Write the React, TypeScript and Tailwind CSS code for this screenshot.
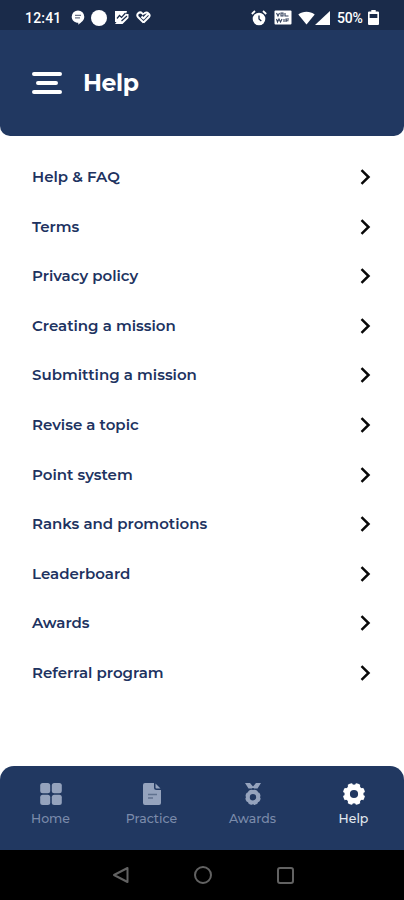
import type { ReactNode } from "react";

const menuItems = [
  "Help & FAQ",
  "Terms",
  "Privacy policy",
  "Creating a mission",
  "Submitting a mission",
  "Revise a topic",
  "Point system",
  "Ranks and promotions",
  "Leaderboard",
  "Awards",
  "Referral program",
];

const notchAngles = [0, 45, 90, 135, 180, 225, 270, 315];

function StatusBar() {
  return (
    <div className="flex h-[30px] items-center bg-[#1a2b4a] pt-[5px] pl-[25px] pr-[25px] font-[Roboto,sans-serif] text-[14px] font-medium leading-none text-white">
      <span className="w-[46px] tracking-[0.2px]">12:41</span>
      {/* chat bubble */}
      <svg className="h-[15px] w-[14px]" viewBox="0 0 14 15">
        <path d="M7 .5A6.300 6.300 0 0 1 13.300 6.800c0 3.500-3 5.500-6 8v-2C3.500 12.800.7 10.200.7 6.800A6.300 6.300 0 0 1 7 .5Z" fill="#fff" />
        <path d="M4 5.300h6M4 7.800h5" stroke="#6b7487" strokeWidth="1.200" />
      </svg>
      <span className="ml-[6px] h-[16px] w-[16px] rounded-full bg-white" />
      {/* activity note */}
      <svg className="ml-[7px] h-[15px] w-[15px]" viewBox="0 0 15 15" fill="none">
        <path d="M1 1h12l-1 3h2.500v4L8.500 14H1l1.500-2H1Z" fill="#fff" />
        <path d="m3 8.500 2.500-3 2 2L11.500 3M7.500 11l5.500-5" stroke="#1a2b4a" strokeWidth="1.200" />
      </svg>
      {/* heart */}
      <svg className="ml-[7px] h-[13px] w-[15px]" viewBox="0 0 15 13" fill="none" stroke="#fff" strokeWidth="2" strokeLinejoin="round">
        <path d="M7.500 11.500 2.200 6.300C-.3 3.500 3.500-.2 6.200 2.400l1.300 1.300M5.500 5.500l2 2 4.700-5C14 3 14 5 12.800 6.300L7.500 11.500M8 2.800c1.300-1.700 3.200-1.700 4.400-.4" />
      </svg>

      {/* alarm */}
      <svg className="ml-auto h-[16px] w-[16px]" viewBox="0 0 16 16" fill="none">
        <circle cx="8" cy="9" r="6.300" fill="#fff" />
        <path d="m.8 4 3.200-3M15.200 4 12 1" stroke="#fff" strokeWidth="1.800" />
        <path d="M8 5.500V9l2.300 2" stroke="#1a2b4a" strokeWidth="1.300" />
      </svg>
      {/* voice over wifi */}
      <svg className="ml-[7px] h-[15px] w-[18px]" viewBox="0 0 18 15" fill="none">
        <rect x=".5" y=".5" width="17" height="14" rx="1" fill="#fff" />
        <path d="m2.500 3 1.500 3 1.500-3M7 3h2v3H7ZM11 3v3h3.500M2.500 9l1 3L5 9l1.500 3L8 9M10 9v3M12 12V9h3M12 10.700h2.500" stroke="#33415c" strokeWidth="1.100" />
      </svg>
      <svg className="ml-[6px] h-[14px] w-[17px]" viewBox="0 0 17 14">
        <path d="M.3 3.500C4.800-.2 12.200-.2 16.700 3.500L8.500 13.500Z" fill="#fff" />
      </svg>
      <svg className="h-[14px] w-[15px]" viewBox="0 0 15 14">
        <path d="M15 0v14H0Z" fill="#fff" />
      </svg>
      <span className="ml-[7px] w-[28px] tracking-[-0.2px]">50%</span>
      <svg className="ml-[3px] h-[15px] w-[11px]" viewBox="0 0 10 15" preserveAspectRatio="none">
        <path fillRule="evenodd" d="M3 0h4v1.500h2a1 1 0 0 1 1 1V14a1 1 0 0 1-1 1H1a1 1 0 0 1-1-1V2.500a1 1 0 0 1 1-1h2ZM1.500 4v4h7V4Z" fill="#fff" />
      </svg>
    </div>
  );
}

function NavItem({ label, active, children }: { label: string; active?: boolean; children: ReactNode }) {
  return (
    <div className={`flex flex-1 flex-col items-center ${active ? "text-white" : "text-[#95a3bd]"}`}>
      <svg className="h-6 w-6" viewBox="0 0 24 24" fill="currentColor">
        {children}
      </svg>
      <span className={`mt-1 text-[12.5px] font-medium leading-[18px] ${active ? "text-[#e3e9f0]" : "text-[#7b8bab]"}`}>
        {label}
      </span>
    </div>
  );
}

export default function App() {
  return (
    <div className="flex h-[900px] w-[404px] flex-col overflow-hidden bg-white font-[Montserrat,Inter,sans-serif]">
      <StatusBar />

      <header className="flex h-[106px] items-center rounded-b-[10px] bg-[#213861] pl-8">
        <svg className="h-[22px] w-[30px]" viewBox="0 0 30 22" fill="none" stroke="#fff" strokeWidth="4" strokeLinecap="round">
          <path d="M2 2h26M6 11h18M2 20h26" />
        </svg>
        <h1 className="ml-[21px] text-[23.5px] font-bold leading-none tracking-[-0.4px] text-white">Help</h1>
      </header>

      <main className="flex-1 pt-[16.3px]">
        {menuItems.map((label) => (
          <div key={label} className="flex h-[49.6px] items-center justify-between pl-8 pr-[33px]">
            <span className="whitespace-nowrap text-[15px] font-semibold leading-5 text-[#203260]">
              {label}
            </span>
            <svg className="h-[16px] w-[11px]" viewBox="0 0 11 16" fill="none" stroke="#080808" strokeWidth="2.500">
              <path d="m1.500 1.200 7 6.800-7 6.800" />
            </svg>
          </div>
        ))}
      </main>

      <nav className="flex h-[84px] rounded-t-[14px] bg-[#213861] pt-4">
        <NavItem label="Home">
          <rect x="1.200" y="1" width="10" height="10.300" rx="2.500" />
          <rect x="12.800" y="1" width="10" height="10.300" rx="2.500" />
          <rect x="1.200" y="12.700" width="10" height="10.300" rx="2.500" />
          <rect x="12.800" y="12.700" width="10" height="10.300" rx="2.500" />
        </NavItem>
        <NavItem label="Practice">
          <path d="M5 1h9v4.500A2.500 2.500 0 0 0 16.500 8H21v13a2 2 0 0 1-2 2H5a2 2 0 0 1-2-2V3a2 2 0 0 1 2-2Z" />
          <path d="m15.500 1.500 5 5h-4a1 1 0 0 1-1-1Z" />
          <path d="M8 12.500h9M8 16h5" stroke="#60728f" strokeWidth="1.700" />
        </NavItem>
        <NavItem label="Awards">
          <path d="M4 1h5l3 3.500L15 1h5l-3.500 5.500h-9Z" />
          <circle cx="12" cy="15.200" r="5.500" fill="none" stroke="currentColor" strokeWidth="4.600" />
          {notchAngles.map((angle) => (
            <circle key={angle} cx="12" cy="7" r="1.100" fill="#213861" transform={`rotate(${angle} 12 15.200)`} />
          ))}
        </NavItem>
        <NavItem label="Help" active>
          <circle cx="12" cy="12" r="7.600" fill="none" stroke="currentColor" strokeWidth="7" />
          {notchAngles.map((angle) => (
            <circle key={angle} cx="12" cy=".7" r="2" fill="#213861" transform={`rotate(${angle} 12 12)`} />
          ))}
        </NavItem>
      </nav>

      <div className="flex h-[50px] items-center justify-center gap-[65px] bg-black">
        <svg className="h-[18px] w-[18px]" viewBox="0 0 18 18" fill="none" stroke="#626262" strokeWidth="2" strokeLinejoin="round">
          <path d="M16.500 2v14L3 9Z" />
        </svg>
        <span className="h-[18px] w-[18px] rounded-full border-2 border-[#626262]" />
        <span className="h-[17px] w-[17px] rounded-[3px] border-2 border-[#626262]" />
      </div>
    </div>
  );
}
